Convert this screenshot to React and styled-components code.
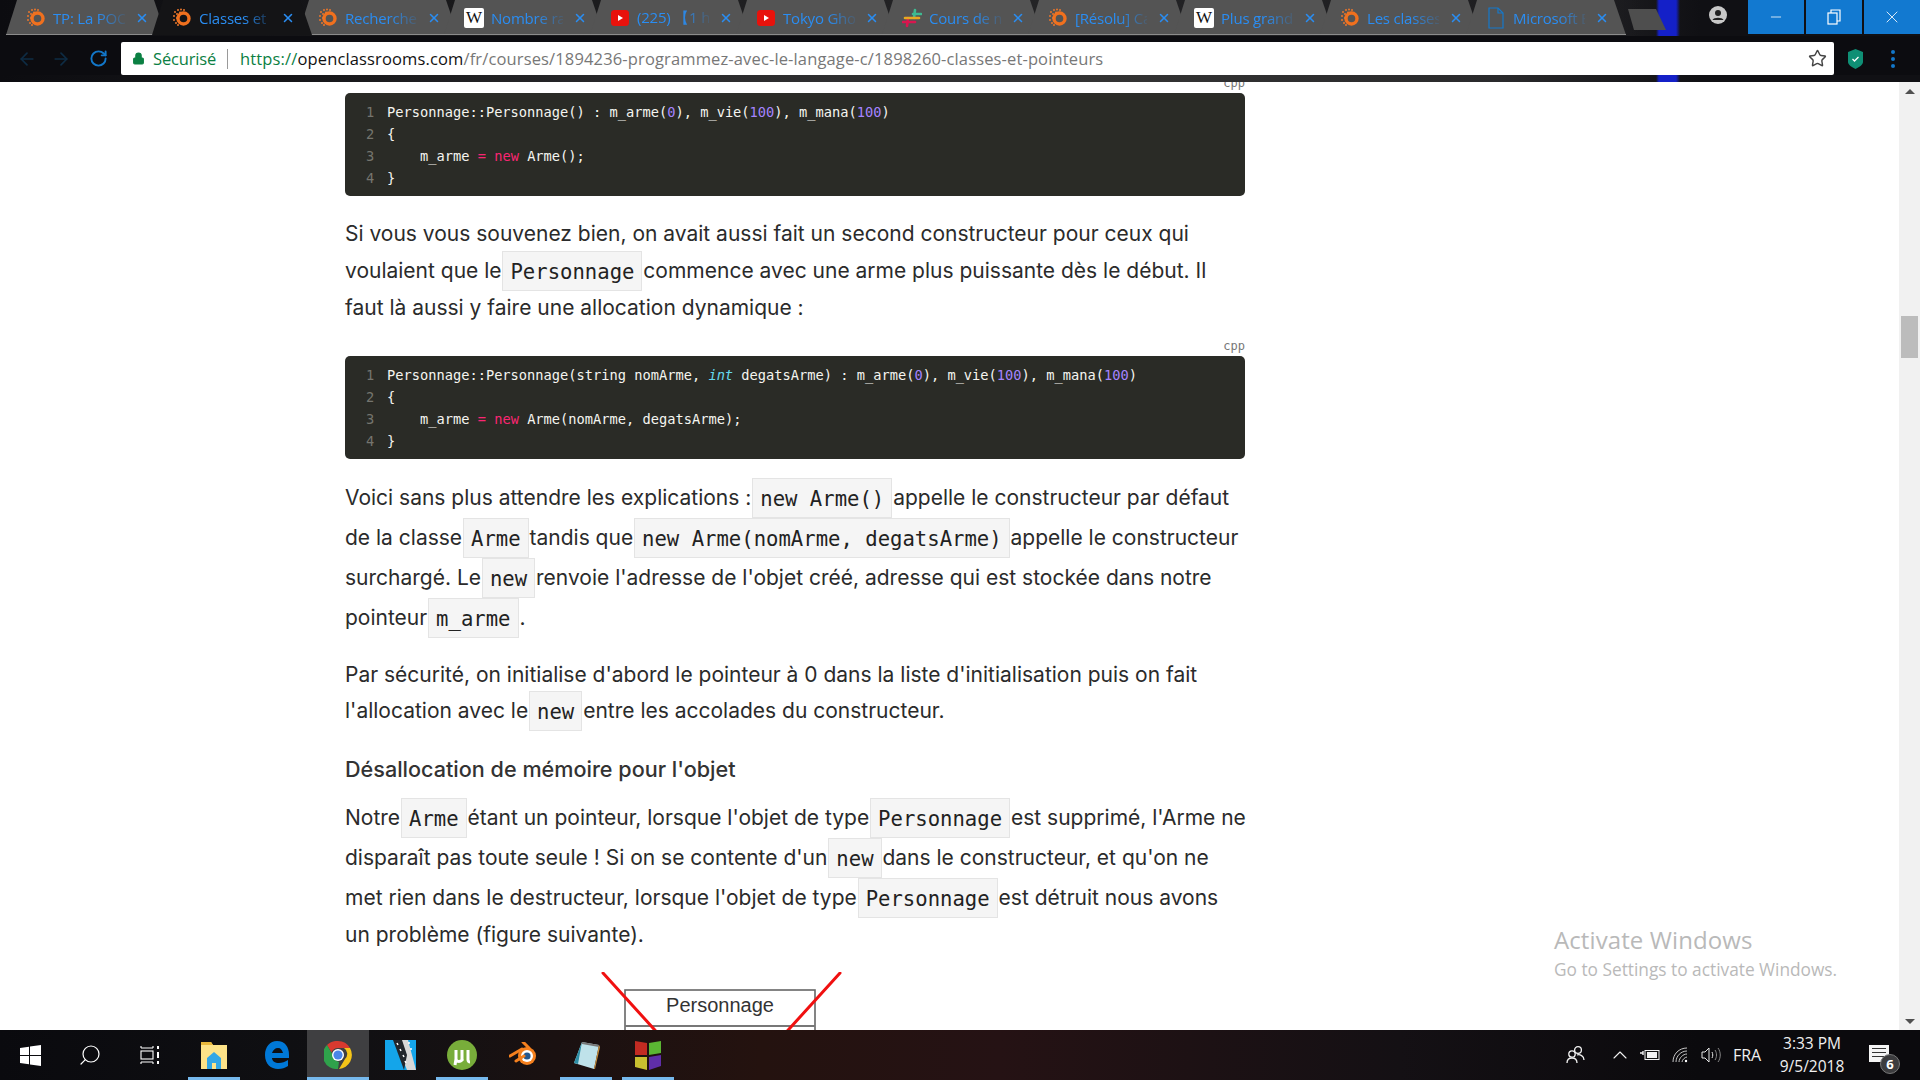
import React from "react";
import styled, { createGlobalStyle } from "styled-components";
import { ArrowLeft, ArrowRight, RotateCw, Lock, Star, X, Minus, Search, ChevronUp } from "lucide-react";

const GlobalStyle = createGlobalStyle`
  html, body { margin: 0; padding: 0; height: 100%; overflow: hidden; background: #fff; }
  body { font-family: "Inter", "Liberation Sans", sans-serif; }
`;

const Screen = styled.div`
  width: 1920px;
  height: 1080px;
  display: flex;
  flex-direction: column;
  position: relative;
  overflow: hidden;
`;

const Chrome = styled.header`
  height: 82px;
  flex: none;
  display: flex;
  flex-direction: column;
  background:
    linear-gradient(90deg, transparent 1656px, #1420c8 1659px, #1420c8 1676px, transparent 1680px),
    linear-gradient(90deg, #0c0c10 0, #17171a 300px, #2b2b2d 700px, #333 1100px, #2a2a2c 1500px, #101014 1700px);
`;

const TabStrip = styled.div`
  height: 36px;
  flex: none;
  display: flex;
  padding-left: 6px;
  background: linear-gradient(90deg, #0c0c10 0, #1a1a1c 500px, #242426 1000px, #1d1d20 1600px, transparent 1640px);
`;

const TabShell = styled.div`
  width: 160px;
  height: 35px;
  margin-right: -14px;
  flex: none;
  position: relative;
  display: flex;
  align-items: center;
  padding: 0 20px;
  box-sizing: border-box;
  z-index: ${(p) => (p.$active ? 2 : 1)};
  &::before {
    content: "";
    position: absolute;
    inset: 0;
    clip-path: polygon(0 100%, 11px 0, 148px 0, 160px 100%);
    background: ${(p) => (p.$active ? "#141416" : "#545454")};
  }
  &::after {
    content: "";
    position: absolute;
    left: 0;
    right: 0;
    bottom: 0;
    height: 1px;
    background: ${(p) => (p.$active ? "transparent" : "#8c8c8c")};
  }
`;

const TabIcon = styled.span`
  width: 20px;
  height: 20px;
  flex: none;
  position: relative;
  display: flex;
  align-items: center;
  justify-content: center;
`;

const TabTitle = styled.span`
  position: relative;
  width: 72px;
  margin-left: 7px;
  font: 15px "Open Sans", sans-serif;
  letter-spacing: -0.2px;
  color: #2a8df2;
  white-space: nowrap;
  -webkit-mask-image: linear-gradient(90deg, #000 62%, rgba(0, 0, 0, 0.15));
  mask-image: linear-gradient(90deg, #000 62%, rgba(0, 0, 0, 0.15));
`;

const TabClose = styled.span`
  position: relative;
  margin-left: 10px;
  display: flex;
  color: #2a8df2;
`;

const NewTab = styled.div`
  width: 38px;
  height: 21px;
  margin: 9px 0 0 16px;
  flex: none;
  background: #4e4e4e;
  clip-path: polygon(0 0, 28px 0, 100% 100%, 6px 100%);
`;

const StripRight = styled.div`
  margin-left: auto;
  display: flex;
  align-items: flex-start;
`;

const ProfileSlot = styled.div`
  width: 58px;
  height: 34px;
  display: flex;
  padding: 6px 0 0 21px;
  box-sizing: border-box;
`;

const WinButton = styled.div`
  width: 56px;
  height: 34px;
  margin-left: 2px;
  background: #1279d0;
  display: flex;
  align-items: center;
  justify-content: center;
  color: #fff;
`;

const Toolbar = styled.div`
  height: 46px;
  flex: none;
  display: flex;
  align-items: flex-start;
  padding: 6px 0 0 7px;
  box-sizing: border-box;
  background: linear-gradient(180deg, #0c0c10 0, #0c0c10 39px, transparent 39px);
`;

const NavSlot = styled.div`
  width: ${(p) => p.$w}px;
  height: 33px;
  flex: none;
  display: flex;
  align-items: center;
  justify-content: center;
  color: ${(p) => p.$color};
`;

const Omnibox = styled.div`
  width: 1713px;
  height: 33px;
  flex: none;
  background: #fff;
  border-radius: 2px;
  display: flex;
  align-items: center;
  padding-left: 11px;
  box-sizing: border-box;
  font: 16.5px "Open Sans", sans-serif;
  letter-spacing: -0.17px;
  white-space: nowrap;
`;

const Secure = styled.span`
  color: #0b8043;
  margin-left: 8px;
`;

const Divider = styled.span`
  width: 1px;
  height: 20px;
  background: #9a9a9a;
  margin: 0 12px 0 11px;
`;

const Url = styled.span`
  letter-spacing: 0.14px;
`;

const UrlScheme = styled.span`
  color: #0b8043;
`;

const UrlHost = styled.span`
  color: #111;
`;

const UrlPath = styled.span`
  color: #777;
`;

const StarSlot = styled.span`
  margin-left: auto;
  margin-right: 7px;
  display: flex;
  color: #444;
`;

const Body = styled.div`
  flex: 1;
  min-height: 0;
  display: flex;
  background: #fff;
`;

const Page = styled.main`
  flex: 1;
  min-width: 0;
  overflow: hidden;
  padding-left: 345px;
`;

const Article = styled.article`
  width: 900px;
  margin-top: -6px;
  color: #2b2b2b;
`;

const Lang = styled.div`
  height: 17px;
  margin-top: ${(p) => p.$top || 0}px;
  font: 12px/14px "DejaVu Sans Mono", monospace;
  color: #777;
  text-align: right;
`;

const CodeBlock = styled.pre`
  margin: 0;
  height: 103px;
  box-sizing: border-box;
  padding: 8px 0 0 21px;
  background: #2a2b26;
  border-radius: 5px;
  font: 13.7px/22px "DejaVu Sans Mono", monospace;
  color: #f5f5f0;
`;

const LineNo = styled.span`
  display: inline-block;
  width: 21px;
  color: #75756e;
`;

const Num = styled.span`
  color: #a584ff;
`;

const Kw = styled.span`
  color: #f92672;
`;

const Type = styled.span`
  color: #66d9ef;
  font-style: italic;
`;

const Para = styled.p`
  --box-shift: ${(p) => (p.$lh - 40) / 2}px;
  margin: ${(p) => p.$top}px 0 0;
  font-size: 21px;
  line-height: ${(p) => p.$lh}px;
  white-space: nowrap;
`;

const TightLine = styled.span`
  display: block;
  line-height: 34px;
`;

const Inline = styled.code`
  display: inline-block;
  height: 40px;
  box-sizing: border-box;
  padding: 0 7px;
  margin: var(--box-shift) -5px;
  vertical-align: top;
  background: #f5f5f5;
  border: 1px solid #e4e4e4;
  font: 20.6px/40px "DejaVu Sans Mono", monospace;
  color: #222;
`;

const SubTitle = styled.h4`
  margin: 25px 0 0;
  font-size: 21.6px;
  font-weight: 500;
  line-height: 30px;
  color: #333;
`;

const Figure = styled.svg`
  display: block;
  margin: 20px 0 0 250px;
`;

const Scrollbar = styled.aside`
  width: 21px;
  flex: none;
  background: #f1f1f1;
  display: flex;
  flex-direction: column;
  align-items: center;
  position: relative;
  justify-content: space-between;
  padding: 7px 0 6px;
  box-sizing: border-box;
`;

const Thumb = styled.div`
  position: absolute;
  top: 234px;
  left: 2px;
  width: 17px;
  height: 42px;
  background: #bcbcbc;
`;

const Arrow = styled.div`
  width: 0;
  height: 0;
  border-left: 5px solid transparent;
  border-right: 5px solid transparent;
  ${(p) => (p.$down ? "border-top: 5px solid #505050;" : "border-bottom: 5px solid #505050;")}
`;

const Watermark = styled.div`
  position: absolute;
  left: 1554px;
  top: 924px;
  font-family: "Open Sans", sans-serif;
  color: #b9b9b9;
`;

const WatermarkTitle = styled.div`
  font-size: 24px;
  line-height: 32px;
  letter-spacing: 0.1px;
`;

const WatermarkSub = styled.div`
  font-size: 17.3px;
  line-height: 24px;
  margin-top: 2px;
`;

const Taskbar = styled.footer`
  height: 50px;
  flex: none;
  display: flex;
  background: linear-gradient(90deg, #0a0a0e 0, #101013 350px, #24120f 760px, #251214 1000px, #141014 1400px, #0b0a0d 1700px);
`;

const TaskGroup = styled.div`
  display: flex;
  margin-right: ${(p) => p.$gap || 0}px;
`;

const TaskCell = styled.div`
  width: ${(p) => p.$w || 62}px;
  height: 50px;
  position: relative;
  display: flex;
  align-items: center;
  justify-content: center;
  background: ${(p) => (p.$active ? "#3f3f41" : "transparent")};
  color: #fff;
  &::after {
    content: "";
    display: ${(p) => (p.$running ? "block" : "none")};
    position: absolute;
    left: ${(p) => (p.$active ? 0 : 5)}px;
    right: ${(p) => (p.$active ? 0 : 5)}px;
    bottom: 0;
    height: 3px;
    background: #76b9ed;
  }
`;

const MirroredSearch = styled(Search)`
  transform: scaleX(-1);
`;

const Tray = styled.div`
  margin-left: auto;
  display: flex;
  align-items: center;
  height: 50px;
  color: #f2f2f2;
`;

const TraySlot = styled.div`
  width: ${(p) => p.$w}px;
  flex: none;
  display: flex;
  justify-content: center;
  align-items: center;
`;

const InputLang = styled.span`
  font: 16px "Open Sans", sans-serif;
  color: #f0f0f0;
`;

const Clock = styled.div`
  width: 90px;
  flex: none;
  text-align: center;
  font: 15.5px/23px "Open Sans", sans-serif;
  color: #f0f0f0;
`;

const Notify = styled.div`
  position: relative;
  width: 20px;
  height: 17px;
  background: #f5f5f5;
  margin: 0 31px 3px 12px;
`;

const NotifyLine = styled.div`
  height: 1px;
  margin: 3px 3px;
  background: #333;
`;

const Badge = styled.div`
  position: absolute;
  right: -11px;
  top: 9px;
  width: 20px;
  height: 20px;
  border-radius: 50%;
  border: 1px solid #777;
  box-sizing: border-box;
  background: #3c3c3e;
  color: #fff;
  font: bold 13px/18px "Open Sans", sans-serif;
  text-align: center;
`;

const OcIcon = () => (
  <svg width="20" height="20" viewBox="0 0 20 20">
    <circle cx="11.5" cy="10.5" r="5.5" fill="none" stroke="#f0701e" strokeWidth="3.4" />
    {[[3, 4], [6, 2], [9, 1.5], [2, 8], [5, 6], [8, 4.5], [2, 12], [5, 10], [4, 15], [6.5, 13], [12, 2], [6, 17]].map(([x, y]) => (
      <circle key={`${x}-${y}`} cx={x} cy={y} r="1" fill="#e8762c" />
    ))}
  </svg>
);

const WikiBox = styled.span`
  width: 20px;
  height: 20px;
  background: #fff;
  border-radius: 2px;
  color: #111;
  font: 17px/20px "Liberation Serif", serif;
  text-align: center;
`;

const YtIcon = () => (
  <svg width="18" height="16" viewBox="0 0 18 16">
    <rect width="18" height="16" rx="3.5" fill="#e8120c" />
    <path d="M7 5l5 3-5 3z" fill="#fff" />
  </svg>
);

const SlackIcon = () => (
  <svg width="20" height="20" viewBox="0 0 20 20" strokeWidth="2.6" strokeLinecap="round">
    <path d="M13 2l-1 8" stroke="#3eb991" />
    <path d="M6 10l-1 8" stroke="#d9164f" />
    <path d="M11 6h8" stroke="#3eb991" />
    <path d="M3 10h14" stroke="#e9a820" />
    <path d="M1 14h12" stroke="#d9164f" />
  </svg>
);

const DocIcon = () => (
  <svg width="16" height="22" viewBox="0 0 16 22" fill="none" stroke="#1579cc" strokeWidth="1.2">
    <path d="M1 1h9l5 5v15H1z" />
    <path d="M10 1v5h5" />
  </svg>
);

const tabs = [
  { id: 1, icon: <OcIcon />, title: "TP: La POO" },
  { id: 2, icon: <OcIcon />, title: "Classes et p", active: true },
  { id: 3, icon: <OcIcon />, title: "Recherche" },
  { id: 4, icon: <WikiBox>W</WikiBox>, title: "Nombre ra" },
  { id: 5, icon: <YtIcon />, title: "(225) 【1 ho" },
  { id: 6, icon: <YtIcon />, title: "Tokyo Ghou" },
  { id: 7, icon: <SlackIcon />, title: "Cours de m" },
  { id: 8, icon: <OcIcon />, title: "[Résolu] Ca" },
  { id: 9, icon: <WikiBox>W</WikiBox>, title: "Plus grand" },
  { id: 10, icon: <OcIcon />, title: "Les classes" },
  { id: 11, icon: <DocIcon />, title: "Microsoft E" },
];

const Code1 = () => (
  <CodeBlock>
    <LineNo>1</LineNo>Personnage::Personnage() : m_arme(<Num>0</Num>), m_vie(<Num>100</Num>), m_mana(<Num>100</Num>){"\n"}
    <LineNo>2</LineNo>{"{\n"}
    <LineNo>3</LineNo>{"    m_arme "}<Kw>=</Kw> <Kw>new</Kw>{" Arme();\n"}
    <LineNo>4</LineNo>{"}"}
  </CodeBlock>
);

const Code2 = () => (
  <CodeBlock>
    <LineNo>1</LineNo>Personnage::Personnage(string nomArme, <Type>int</Type> degatsArme) : m_arme(<Num>0</Num>), m_vie(<Num>100</Num>), m_mana(<Num>100</Num>){"\n"}
    <LineNo>2</LineNo>{"{\n"}
    <LineNo>3</LineNo>{"    m_arme "}<Kw>=</Kw> <Kw>new</Kw>{" Arme(nomArme, degatsArme);\n"}
    <LineNo>4</LineNo>{"}"}
  </CodeBlock>
);

const App = () => (
  <Screen>
    <GlobalStyle />
    <Chrome>
      <TabStrip>
        {tabs.map((t) => (
          <TabShell key={t.id} $active={t.active}>
            <TabIcon>{t.icon}</TabIcon>
            <TabTitle>{t.title}</TabTitle>
            <TabClose><X size={14} strokeWidth={2.6} /></TabClose>
          </TabShell>
        ))}
        <NewTab />
        <StripRight>
          <ProfileSlot>
            <svg width="18" height="18" viewBox="0 0 18 18">
              <circle cx="9" cy="9" r="9" fill="#c8c8c8" />
              <circle cx="9" cy="7" r="3" fill="#222" />
              <path d="M3.5 14c1-3 10-3 11 0z" fill="#222" />
            </svg>
          </ProfileSlot>
          <WinButton><Minus size={16} strokeWidth={1.2} /></WinButton>
          <WinButton>
            <svg width="14" height="16" viewBox="0 0 14 16" fill="none" stroke="#fff" strokeWidth="1.2">
              <rect x="1" y="4" width="9" height="11" />
              <path d="M4 4V1h9v11h-3" />
            </svg>
          </WinButton>
          <WinButton><X size={20} strokeWidth={1} /></WinButton>
        </StripRight>
      </TabStrip>
      <Toolbar>
        <NavSlot $w={40} $color="#0e2c44"><ArrowLeft size={20} /></NavSlot>
        <NavSlot $w={28} $color="#0e2c44"><ArrowRight size={20} /></NavSlot>
        <NavSlot $w={46} $color="#1277c9"><RotateCw size={19} strokeWidth={2.4} /></NavSlot>
        <Omnibox>
          <Lock size={13} color="#0b8043" fill="#0b8043" />
          <Secure>Sécurisé</Secure>
          <Divider />
          <Url>
            <UrlScheme>https://</UrlScheme>
            <UrlHost>openclassrooms.com</UrlHost>
            <UrlPath>/fr/courses/1894236-programmez-avec-le-langage-c/1898260-classes-et-pointeurs</UrlPath>
          </Url>
          <StarSlot><Star size={19} strokeWidth={1.8} /></StarSlot>
        </Omnibox>
        <NavSlot $w={42} $color="#0f9d7a">
          <svg width="15" height="20" viewBox="0 0 15 20">
            <path d="M7.5 0L15 3v10c0 3-4 5-7.5 7C4 18 0 16 0 13V3z" fill="#0f8f75" />
            <path d="M4.5 10l2 2 4-4" fill="none" stroke="#fff" strokeWidth="1.3" />
          </svg>
        </NavSlot>
        <NavSlot $w={34} $color="#1277c9">
          <svg width="4" height="18" viewBox="0 0 4 18" fill="currentColor">
            <circle cx="2" cy="2" r="2" />
            <circle cx="2" cy="9" r="2" />
            <circle cx="2" cy="16" r="2" />
          </svg>
        </NavSlot>
      </Toolbar>
    </Chrome>

    <Body>
      <Page>
        <Article>
          <Lang>cpp</Lang>
          <Code1 />
          <Para $top={19} $lh={37}>
            Si vous vous souvenez bien, on avait aussi fait un second constructeur pour ceux qui<br />
            voulaient que le <Inline>Personnage</Inline> commence avec une arme plus puissante dès le début. Il<br />
            faut là aussi y faire une allocation dynamique :
          </Para>
          <Lang $top={13}>cpp</Lang>
          <Code2 />
          <Para $top={19} $lh={40}>
            Voici sans plus attendre les explications : <Inline>new Arme()</Inline> appelle le constructeur par défaut<br />
            de la classe <Inline>Arme</Inline> tandis que <Inline>new Arme(nomArme, degatsArme)</Inline> appelle le constructeur<br />
            surchargé. Le <Inline>new</Inline> renvoie l'adresse de l'objet créé, adresse qui est stockée dans notre<br />
            pointeur <Inline>m_arme</Inline> .
          </Para>
          <Para $top={19} $lh={36}>
            Par sécurité, on initialise d'abord le pointeur à 0 dans la liste d'initialisation puis on fait<br />
            l'allocation avec le <Inline>new</Inline> entre les accolades du constructeur.
          </Para>
          <SubTitle>Désallocation de mémoire pour l'objet</SubTitle>
          <Para $top={14} $lh={40}>
            Notre <Inline>Arme</Inline> étant un pointeur, lorsque l'objet de type <Inline>Personnage</Inline> est supprimé, l'Arme ne<br />
            disparaît pas toute seule ! Si on se contente d'un <Inline>new</Inline> dans le constructeur, et qu'on ne<br />
            met rien dans le destructeur, lorsque l'objet de type <Inline>Personnage</Inline> est détruit nous avons
            <TightLine>un problème (figure suivante).</TightLine>
          </Para>
          <Figure width="252" height="90" viewBox="0 0 252 90">
            <rect x="30" y="18" width="190" height="80" fill="#fff" stroke="#666" strokeWidth="1.6" />
            <path d="M30 54h190" stroke="#777" strokeWidth="2" />
            <text x="125" y="40" textAnchor="middle" fontFamily="Liberation Sans" fontSize="20" fill="#333">Personnage</text>
            <path d="M8 1l60 66M245 1l-60 66" stroke="#f01010" strokeWidth="3" strokeLinecap="round" />
          </Figure>
        </Article>
      </Page>
      <Scrollbar>
        <Arrow />
        <Thumb />
        <Arrow $down />
      </Scrollbar>
    </Body>

    <Watermark>
      <WatermarkTitle>Activate Windows</WatermarkTitle>
      <WatermarkSub>Go to Settings to activate Windows.</WatermarkSub>
    </Watermark>

    <Taskbar>
      <TaskGroup $gap={3}>
        <TaskCell $w={60}>
          <svg width="21" height="21" viewBox="0 0 21 21" fill="#fff">
            <path d="M0 3l9-1.3V10H0zM10 1.5L21 0v10H10zM0 11h9v8.3L0 18zM10 11h11v10l-11-1.5z" />
          </svg>
        </TaskCell>
        <TaskCell $w={60}><MirroredSearch size={24} strokeWidth={1.2} /></TaskCell>
        <TaskCell $w={60}>
          <svg width="20" height="20" viewBox="0 0 20 20" fill="none" stroke="#fff" strokeWidth="1.1">
            <rect x="1" y="6" width="12" height="8" />
            <path d="M1 3h12M1 17h12M1 1v2M13 1v2M1 17v2M13 17v2" />
            <path d="M18 1v3M18 7v6M18 16v3" strokeWidth="2" />
          </svg>
        </TaskCell>
      </TaskGroup>
      <TaskGroup>
        <TaskCell $running>
          <svg width="28" height="30" viewBox="0 0 28 30">
            <path d="M1 2h10l2 3h14v24H1z" fill="#fde388" />
            <path d="M1 2h10l2 3H1z" fill="#e8b83c" />
            <path d="M7 18l7-6 7 6v11h-5v-6h-4v6H7z" fill="#33a7e6" />
          </svg>
        </TaskCell>
        <TaskCell>
          <svg width="25" height="30" viewBox="0 0 25 30">
            <path d="M13 1C6 1 1 7 1 15c0 9 6 14 13 14 4 0 7-1 10-3v-6c-3 2-6 3-9 3-4 0-7-2-7-5h17v-3C25 7 21 1 13 1zm-5 12c1-3 3-5 6-5 3 0 4 2 5 5z" fill="#0078d7" />
          </svg>
        </TaskCell>
        <TaskCell $active $running>
          <svg width="28" height="28" viewBox="0 0 28 28">
            <path d="M14 0a14 14 0 0 1 12 7H14a7 7 0 0 0-6.5 4.5L3 4a14 14 0 0 1 11-4z" fill="#d93a2f" />
            <path d="M26 7a14 14 0 0 1-11 21l6-10a7 7 0 0 0-1-11z" fill="#f5c518" />
            <path d="M3 4l7 12a7 7 0 0 0 5 5l-1 7A14 14 0 0 1 3 4z" fill="#2fa24b" />
            <circle cx="14" cy="14" r="6" fill="#fff" />
            <circle cx="14" cy="14" r="4.6" fill="#4a86e8" />
          </svg>
        </TaskCell>
        <TaskCell>
          <svg width="31" height="30" viewBox="0 0 31 30">
            <rect width="31" height="30" fill="#14a5ea" />
            <path d="M10 0h13l8 30H22z" fill="#d8d8d8" />
            <path d="M8 0h9l5 15-3 15z" fill="#22262c" />
            <path d="M12 3l1 2M15 9l1 2M18 15l1 2M20 21l1 2M24 2l0 2M26 8l0 2" stroke="#fff" strokeWidth="1.5" />
          </svg>
        </TaskCell>
        <TaskCell $running>
          <svg width="30" height="30" viewBox="0 0 30 30">
            <ellipse cx="15" cy="15" rx="15" ry="15" fill="#78ad3a" />
            <path d="M9 10v9c0 3 4 3 6 1M15 10v10l1 1M21 10v10c0 1 1 2 2 2M9 19l-1 6" stroke="#fff" strokeWidth="3" fill="none" />
          </svg>
        </TaskCell>
        <TaskCell>
          <svg width="30" height="26" viewBox="0 0 30 26">
            <circle cx="18" cy="14" r="9" fill="#f5801e" />
            <circle cx="18" cy="14" r="6" fill="#fff" />
            <circle cx="18" cy="14" r="3.6" fill="#26588e" />
            <path d="M1 14l12-7M7 19l8-5M14 0l6 6" stroke="#f5801e" strokeWidth="3" strokeLinecap="round" />
          </svg>
        </TaskCell>
        <TaskCell $running>
          <svg width="27" height="29" viewBox="0 0 27 29">
            <path d="M9 1l17 3-5 24-20-6z" fill="#bfe2ea" />
            <path d="M9 1l-8 21 4 1z" fill="#2d8ea5" />
            <path d="M9 1l17 3v2L9 3z" fill="#777" />
            <path d="M21 28l5-24 1 2-5 22z" fill="#c98f3c" />
          </svg>
        </TaskCell>
        <TaskCell $running>
          <svg width="28" height="30" viewBox="0 0 28 30">
            <path d="M1 1l12 2v12H1z" fill="#c22b22" />
            <path d="M15 3l12-2v12l-12 2z" fill="#5bb533" />
            <path d="M1 17h12v13L1 27z" fill="#c8c030" />
            <path d="M15 17l12-2v11l-12 4z" fill="#5f2ea8" />
          </svg>
        </TaskCell>
      </TaskGroup>
      <Tray>
        <TraySlot $w={40}>
          <svg width="19" height="20" viewBox="0 0 19 20" fill="none" stroke="#f2f2f2" strokeWidth="1.3">
            <circle cx="12" cy="5" r="3.4" />
            <circle cx="6" cy="9" r="3.2" />
            <path d="M1 18c0-3 2-5 5-5s5 2 5 5M11 10c3-1 7 1 7 5" />
          </svg>
        </TraySlot>
        <TraySlot $w={10} />
        <TraySlot $w={30}><ChevronUp size={24} strokeWidth={1.1} /></TraySlot>
        <TraySlot $w={30}>
          <svg width="20" height="12" viewBox="0 0 20 12">
            <rect x="5" y="1.5" width="14" height="9" fill="#111" stroke="#f2f2f2" />
            <rect x="7" y="3" width="10" height="6" fill="#f2f2f2" />
            <path d="M0 4h3M3 2v4" stroke="#f2f2f2" strokeWidth="1.4" />
          </svg>
        </TraySlot>
        <TraySlot $w={30}>
          <svg width="16" height="16" viewBox="0 0 16 16" fill="none" stroke="#c8c8c8" strokeWidth="1">
            <path d="M1 15C1 7 7 1 15 1M4 15c0-6 5-11 11-11M7 15c0-4 4-8 8-8M10 15c0-2 3-5 5-5" />
            <circle cx="14" cy="14" r="1.2" fill="#fff" stroke="none" />
          </svg>
        </TraySlot>
        <TraySlot $w={32}>
          <svg width="20" height="16" viewBox="0 0 20 16" fill="none" stroke="#e8e8e8" strokeWidth="1">
            <path d="M1 5h3l4-4v14l-4-4H1zM11 5c1 2 1 4 0 6" />
            <path d="M14 3c2 3 2 7 0 10M17 1c3 4 3 10 0 14" stroke="#888" />
          </svg>
        </TraySlot>
        <TraySlot $w={40}><InputLang>FRA</InputLang></TraySlot>
        <Clock>3:33 PM<br />9/5/2018</Clock>
        <Notify>
          <NotifyLine />
          <NotifyLine />
          <NotifyLine />
          <Badge>6</Badge>
        </Notify>
      </Tray>
    </Taskbar>
  </Screen>
);

export default App;
